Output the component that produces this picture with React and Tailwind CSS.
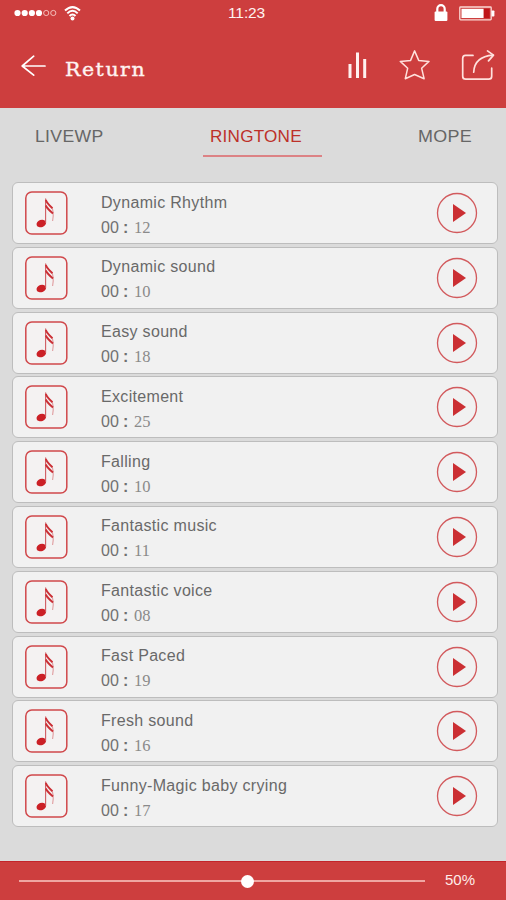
const TABS = ['LIVEWP', 'RINGTONE', 'MOPE'];

const RINGTONES = [
  { title: 'Dynamic Rhythm', seconds: '12' },
  { title: 'Dynamic sound', seconds: '10' },
  { title: 'Easy sound', seconds: '18' },
  { title: 'Excitement', seconds: '25' },
  { title: 'Falling', seconds: '10' },
  { title: 'Fantastic music', seconds: '11' },
  { title: 'Fantastic voice', seconds: '08' },
  { title: 'Fast Paced', seconds: '19' },
  { title: 'Fresh sound', seconds: '16' },
  { title: 'Funny-Magic baby crying', seconds: '17' },
];

function StatusBar() {
  return (
    <div className="flex h-[26px] items-center pl-[14px] pr-[11px]">
      <div className="flex w-[214px] items-center">
        <svg width="43" height="8" viewBox="0 0 43 8" fill="#fff">
          <circle cx="3.5" cy="4" r="3.1" />
          <circle cx="10.7" cy="4" r="3.1" />
          <circle cx="17.9" cy="4" r="3.1" />
          <circle cx="25" cy="4" r="3.1" />
          <g fill="none" stroke="#f6c9c5" strokeWidth="0.9">
            <circle cx="32.2" cy="4" r="2.6" />
            <circle cx="39.3" cy="4" r="2.6" />
          </g>
        </svg>
        <svg className="ml-[7px]" width="17" height="16" viewBox="0 0 17 16" fill="none" stroke="#fff" strokeWidth="2">
          <path d="M1 5.6Q8.5-1.4 16 5.6" />
          <path d="M3.3 8.4Q8.5 3.1 13.7 8.4" />
          <path d="M5.5 11Q8.5 7.8 11.5 11" />
          <circle cx="8.5" cy="13.5" r="2" fill="#fff" stroke="none" />
        </svg>
      </div>
      <span className="text-[15.5px] leading-none tracking-[-0.1px] text-[#fff3f1]">11:23</span>
      <div className="flex flex-1 items-center justify-end">
        <svg width="14" height="18" viewBox="0 0 14 18" fill="none">
          <path d="M3.3 8V4.9a3.7 3.7 0 0 1 7.4 0V8" stroke="#fff" strokeWidth="2.2" />
          <rect x="0.6" y="7.5" width="12.8" height="9.5" rx="1" fill="#fff" />
        </svg>
        <svg className="ml-[11px]" width="36" height="15" viewBox="0 0 36 15">
          <rect x="0.8" y="1" width="31.4" height="12.8" rx="0.8" fill="none" stroke="#fbd9d5" strokeWidth="1.3" />
          <rect x="2.5" y="2.8" width="22" height="9.2" fill="#fff" />
          <rect x="25" y="2.8" width="5.6" height="9.2" fill="#bf1519" />
          <rect x="32.6" y="4.5" width="2.8" height="6" rx="0.8" fill="#fff" />
        </svg>
      </div>
    </div>
  );
}

function Toolbar() {
  return (
    <div className="flex h-[82px] items-center pb-[3px] pl-[21px] pr-[11px]">
      <svg width="25" height="22" viewBox="0 0 25 22" fill="none" stroke="#fff" strokeWidth="1.7" strokeLinecap="round" strokeLinejoin="round">
        <path d="M12.7 1.2L1.2 11l11.5 9.2M1.2 11H24" />
      </svg>
      <h1 className="ml-[19px] mt-[8px] origin-left scale-x-[1.08] font-['DejaVu_Serif',serif] text-[19px] leading-none tracking-[1.4px] text-[#fff3f1] [-webkit-text-stroke:0.35px_#fff3f1]">Return</h1>
      <svg className="ml-auto" width="20" height="28" viewBox="0 0 20 28" fill="#fff1ef">
        <rect x="0.5" y="12" width="3" height="14" />
        <rect x="8" y="0.5" width="3" height="25.5" />
        <rect x="15.2" y="7" width="3" height="19" />
      </svg>
      <svg className="ml-[31px]" width="32" height="32" viewBox="0 0 32 32" fill="none" stroke="#ffe1dd" strokeWidth="1.5" strokeLinejoin="round">
        <path d="M15.6 0.9L19.7 10.4 30 11.4 22.6 18.2 25.1 28.7 15.6 24.5 6.3 28.700 8.7 18.2 1.3 11.4 11.6 10.4Z" />
      </svg>
      <svg className="ml-[30px]" width="34" height="32" viewBox="0 0 34 32" fill="none" stroke="#ffe1dd" strokeWidth="1.7" strokeLinecap="round" strokeLinejoin="round">
        <path d="M12 5.4H4.5Q1.7 5.4 1.7 8.4v17.800q0 3 3 3h23q3 0 3-3v-8" />
        <path d="M12.7 22.200Q13.5 6.4 32 5.1" />
        <path d="M26.5 0.9L32.5 5.1 27.5 10.9" />
      </svg>
    </div>
  );
}

function Tabs() {
  return (
    <nav className="flex h-[74px] items-start justify-between pl-[35px] pr-[33px] pt-[20px] text-[16px] leading-[18px] text-[#666]">
      <span className="w-[70px] origin-left scale-x-[1.1] tracking-[0.3px]">{TABS[0]}</span>
      <div className="ml-[2px] w-[119px] border-b-[2px] border-[#dc8285] pb-[9px]">
        <span className="ml-[7px] inline-block origin-left scale-x-[1.07] tracking-[0.2px] text-[#bd3029]">{TABS[1]}</span>
      </div>
      <span className="w-[55px] origin-left scale-x-[1.12] tracking-[0.3px]">{TABS[2]}</span>
    </nav>
  );
}

function NoteIcon() {
  return (
    <svg width="43" height="44" viewBox="0 0 43 44">
      <rect x="0.8" y="1" width="41" height="42" rx="6" fill="#f4f2f2" stroke="#d0484b" strokeWidth="1.5" />
      <ellipse cx="16.3" cy="32.5" rx="4.9" ry="3.6" transform="rotate(-20 16.3 32.5)" fill="#cb2026" />
      <path d="M20.6 32V7.500" stroke="#cf5b60" strokeWidth="1.1" />
      <path d="M20.8 8.500Q22.500 12.500 26 15.500 29.500 19.500 27.600 30" fill="none" stroke="#e09b9e" strokeWidth="1.1" />
      <path d="M20.8 9Q22 12.500 27.500 17.200M20.8 14.500Q22.500 18 28 22.500" fill="none" stroke="#cb3036" strokeWidth="1.9" />
    </svg>
  );
}

function RingtoneRow({ title, seconds }) {
  return (
    <li className="flex h-[62px] items-center rounded-[6px] border-[1.5px] border-[#bdbdbd] bg-[#f1f1f1] pl-[12px] pr-[19.5px]">
      <NoteIcon />
      <div className="ml-[33px] flex-1 pt-[4px] text-[#696969]">
        <p className="text-[16px] leading-[20px] tracking-[0.32px]">{title}</p>
        <p className="mt-[5px] flex items-center text-[16px] leading-[20px] text-[#707070]">
          <span className="w-[22px]">00</span>
          <span className="w-[11px] font-bold">:</span>
          <span className="font-['Liberation_Serif',serif] text-[16.5px] text-[#8a8a8a]">{seconds}</span>
        </p>
      </div>
      <svg width="42" height="42" viewBox="0 0 42 42">
        <circle cx="21" cy="21" r="19.5" fill="none" stroke="#d25a5d" strokeWidth="1.3" />
        <path d="M17 12v18l13-9z" fill="#cb2f33" />
      </svg>
    </li>
  );
}

function VolumeBar() {
  return (
    <footer className="flex h-[39px] items-center border-t border-[#c3242a] bg-[#cd3e3e] pl-[19px] pr-[31px]">
      <div className="relative h-[1.5px] w-[406px] bg-[#efa6a2]">
        <div className="absolute left-[222px] top-[-5px] size-[13px] rounded-full bg-white" />
      </div>
      <span className="mb-[3px] ml-auto text-[15px] leading-none text-[#ffebe8]">50%</span>
    </footer>
  );
}

export default function App() {
  return (
    <div className="flex h-[900px] w-[506px] flex-col overflow-hidden bg-[#dbdbdb] font-['Liberation_Sans',sans-serif]">
      <header className="h-[108px] bg-[#cd3e3e]">
        <StatusBar />
        <Toolbar />
      </header>
      <Tabs />
      <ul className="flex flex-1 flex-col gap-[2.8px] pl-[12px] pr-[8px]">
        {RINGTONES.map((tone) => (
          <RingtoneRow key={tone.title} {...tone} />
        ))}
      </ul>
      <VolumeBar />
    </div>
  );
}
